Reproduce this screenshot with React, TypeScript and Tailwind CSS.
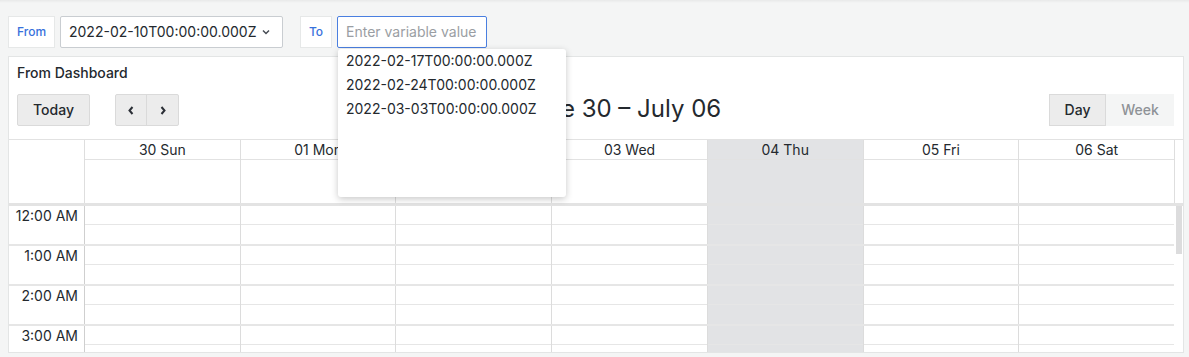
import React from 'react';

const days = ['30 Sun', '01 Mon', '02 Tue', '03 Wed', '04 Thu', '05 Fri', '06 Sat'];
const hours = ['12:00 AM', '1:00 AM', '2:00 AM', '3:00 AM', '4:00 AM', '5:00 AM'];
const options = ['2022-02-17T00:00:00.000Z', '2022-02-24T00:00:00.000Z', '2022-03-03T00:00:00.000Z'];

function Chevron({ dir }: { dir: 'down' | 'left' | 'right' }) {
  if (dir === 'down') {
    return (
      <svg width="8" height="6" viewBox="0 0 8 6" fill="none">
        <path d="M1 1.5 4 4.5 7 1.5" stroke="#464c54" strokeWidth="1.5" />
      </svg>
    );
  }
  return (
    <svg width="6" height="9" viewBox="0 0 6 9" fill="none">
      <path d={dir === 'left' ? 'M4.5 1 1.5 4.5 4.5 8' : 'M1.5 1 4.5 4.5 1.5 8'} stroke="#2b2f36" strokeWidth="2" />
    </svg>
  );
}

export default function App() {
  return (
    <div className="w-[1189px] h-[357px] overflow-hidden bg-[#f4f5f5] font-['Inter',sans-serif] text-[#24292e]">
      <div className="h-[3px] bg-linear-to-b from-[#e8e9e9] to-[#f4f5f5]" />

      {/* variables bar */}
      <div className="flex items-center pt-[13px] pl-2 h-[45px]">
        <div className="w-[47px] h-8 bg-white border border-[#e6e8e8] flex items-center justify-center text-xs font-medium text-[#3871dc]">
          From
        </div>
        <div className="ml-[5px] w-[223px] h-8 bg-white border border-[#c9cdd1] rounded-[2px] flex items-center justify-between pl-2 pr-[12px] text-sm">
          <span>2022-02-10T00:00:00.000Z</span>
          <Chevron dir="down" />
        </div>
        <div className="ml-[17px] w-[32px] h-8 bg-white border border-[#e6e8e8] flex items-center justify-center text-xs font-medium text-[#3871dc]">
          To
        </div>
        <div className="relative ml-[5px]">
          <div className="w-[150px] h-8 bg-white border border-[#4a7fe0] rounded-[2px] flex items-center pl-2 text-sm text-[#9a9ea3]">
            Enter variable value
          </div>
          <div className="absolute z-10 left-px top-[33px] w-[228px] h-[148px] bg-white rounded-[3px] shadow-[0_2px_7px_rgba(0,0,0,0.22)]">
            {options.map((o) => (
              <div key={o} className="h-6 leading-6 pl-2 text-sm text-[#24292e]">
                {o}
              </div>
            ))}
          </div>
        </div>
      </div>

      {/* panel */}
      <div className="ml-2 mt-2 w-[1176px] h-[297px] bg-white border border-[#e3e5e5] overflow-hidden">
        <div className="px-2 pt-[6px] text-sm font-medium leading-5">From Dashboard</div>

        <div className="mt-[11px] pl-2 pr-[9px] h-8 flex items-center">
          <div className="flex items-center">
            <div className="w-[73px] h-8 bg-[#ececec] border border-[#dadada] rounded-[2px] flex items-center justify-center text-sm font-medium">
              Today
            </div>
            <div className="ml-[25px] flex h-8 border border-[#dadada] rounded-[2px] bg-[#ececec]">
              <div className="w-[31px] flex items-center justify-center border-r border-[#dadada]">
                <Chevron dir="left" />
              </div>
              <div className="w-[31px] flex items-center justify-center">
                <Chevron dir="right" />
              </div>
            </div>
          </div>
          <div className="flex-1 text-center text-2xl leading-8 pl-[12px] -mt-[3px]">June 30 – July 06</div>
          <div className="flex h-8 rounded-[2px] text-sm">
            <div className="w-[57px] bg-[#ececec] border border-[#dadada] flex items-center justify-center font-medium">
              Day
            </div>
            <div className="w-[68px] bg-[#f4f5f5] flex items-center justify-center font-medium text-[#8e9297]">
              Week
            </div>
          </div>
        </div>

        {/* calendar header */}
        <div className="mt-[13px] border-t border-[#e2e2e2] flex">
          <div className="w-[75px] shrink-0" />
          {days.map((d, i) => (
            <div
              key={d}
              className={i === 4 ? 'flex-1 border-l border-[#dedede] bg-[#e2e3e5]' : 'flex-1 border-l border-[#dedede]'}
            >
              <div className="h-[20px] border-b border-[#e2e2e2] text-center text-sm leading-[19px]">{d}</div>
              <div className="h-[43px]" />
            </div>
          ))}
          <div className="w-[9px] border-l border-[#dedede]" />
        </div>
        <div className="h-[3px] bg-[#e3e3e3]" />

        {/* time grid */}
        <div className="flex">
          <div className="flex-1">
            {hours.map((h) => (
              <div key={h} className="flex h-[40px] border-b-2 border-[#e6e6e6]">
                <div className="w-[75px] shrink-0 text-right pr-[6px] text-sm leading-5">{h}</div>
                {days.map((d, i) => (
                  <div
                    key={d}
                    className={
                      i === 0
                        ? 'flex-1 border-l border-[#cfcfcf]'
                        : i === 4
                          ? 'flex-1 border-l border-[#dcdcdc] bg-[#e2e3e5]'
                          : 'flex-1 border-l border-[#dcdcdc]'
                    }
                  >
                    <div className="h-[19px] border-b border-[#e6e6e6]" />
                  </div>
                ))}
              </div>
            ))}
          </div>
          <div className="w-[9px] pl-[2px]">
            <div className="w-[6px] h-[48px] bg-[#dcdcdd]" />
          </div>
        </div>
      </div>
    </div>
  );
}
